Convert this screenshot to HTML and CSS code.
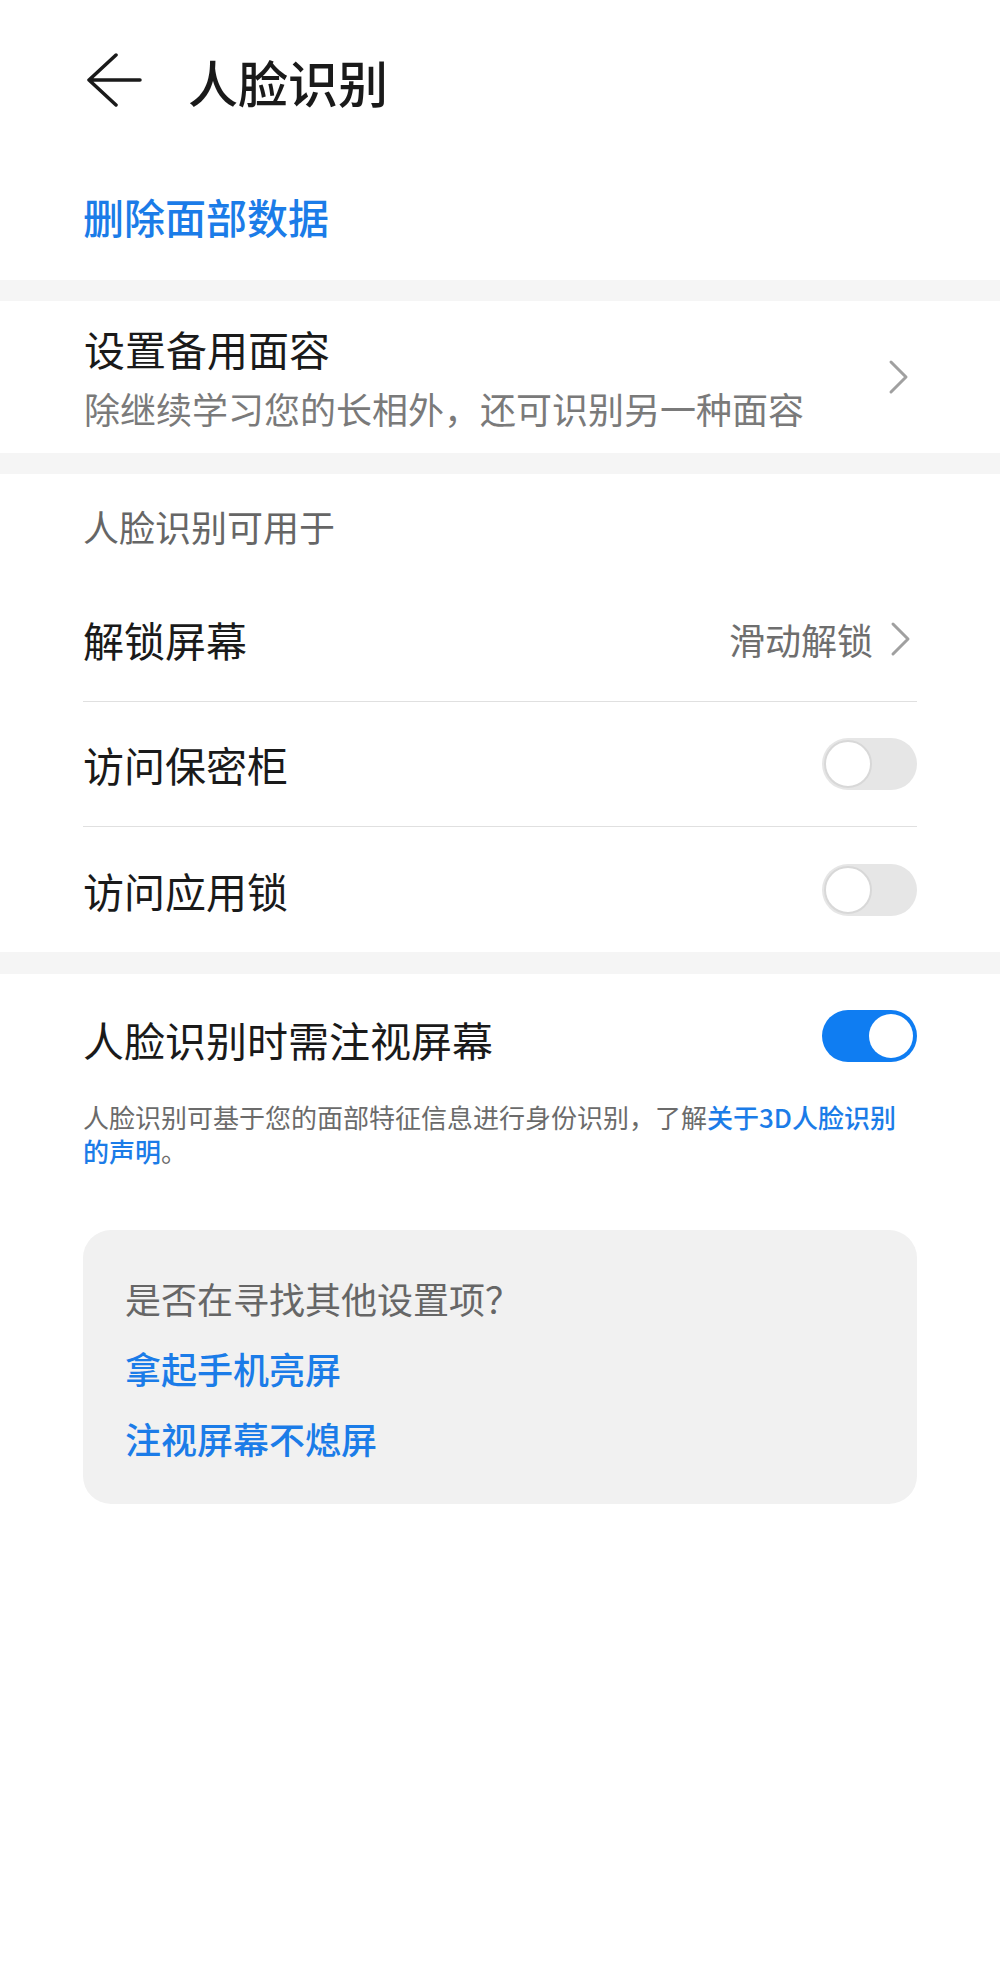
FILE: index.html
```html
<html lang="zh-CN">

<head>
    <meta charset="UTF-8">
    <meta name="viewport" content="width=device-width, initial-scale=1.0">
    <title>人脸识别</title>
    <link rel="stylesheet" href="styles.css">
</head>

<body>
    <header class="top-bar">
        <a href="#" class="back-button" aria-label="返回">
            <svg width="56" height="56" viewBox="0 0 56 56">
                <path d="M3 27 H54 M30 2 L3 27 L30 52" fill="none" stroke="#1a1a1a" stroke-width="3.5" stroke-linecap="round" stroke-linejoin="round" />
            </svg>
        </a>
        <h1>人脸识别</h1>
    </header>

    <div class="delete-row">
        <a href="#" class="link">删除面部数据</a>
    </div>

    <div class="band"></div>

    <div class="list-item">
        <div class="item-text">
            <div class="item-title">设置备用面容</div>
            <div class="item-sub">除继续学习您的长相外，还可识别另一种面容</div>
        </div>
        <svg class="chevron" width="24" height="36" viewBox="0 0 24 36">
            <path d="M4 3 L19 18 L4 33" fill="none" stroke="#a0a0a0" stroke-width="3" stroke-linecap="round" stroke-linejoin="round" />
        </svg>
    </div>

    <div class="band"></div>

    <section class="group">
        <div class="group-label">人脸识别可用于</div>
        <div class="row">
            <span class="row-title">解锁屏幕</span>
            <span class="row-value">滑动解锁
                <svg class="chevron" width="24" height="36" viewBox="0 0 24 36">
                    <path d="M4 3 L19 18 L4 33" fill="none" stroke="#a0a0a0" stroke-width="3" stroke-linecap="round" stroke-linejoin="round" />
                </svg>
            </span>
        </div>
        <div class="row">
            <span class="row-title">访问保密柜</span>
            <span class="switch"><span class="knob"></span></span>
        </div>
        <div class="row">
            <span class="row-title">访问应用锁</span>
            <span class="switch"><span class="knob"></span></span>
        </div>
    </section>

    <div class="band band-wide"></div>

    <section class="group">
        <div class="row row-plain">
            <span class="row-title">人脸识别时需注视屏幕</span>
            <span class="switch on"><span class="knob"></span></span>
        </div>
        <p class="note">人脸识别可基于您的面部特征信息进行身份识别，了解<a href="#" class="note-link">关于3D人脸识别的声明</a>。</p>

        <div class="suggest-card">
            <div class="suggest-title">是否在寻找其他设置项？</div>
            <a href="#" class="link suggest-link">拿起手机亮屏</a>
            <a href="#" class="link suggest-link">注视屏幕不熄屏</a>
        </div>
    </section>
</body>

</html>
```

FILE: styles.css
```css
/* Global Styles */
body {
    font-family: "Noto Sans CJK SC", "Noto Sans", sans-serif;
    margin: 0;
    padding: 0;
    background-color: #fff;
    color: #1a1a1a;
    width: 1000px;
}

a {
    text-decoration: none;
}

.link {
    color: #1b7ce8;
    font-weight: 500;
}

/* Top Bar */
.top-bar {
    height: 162px;
    display: flex;
    align-items: center;
    padding-left: 86px;
    box-sizing: border-box;
}

.back-button {
    display: flex;
    width: 56px;
    height: 56px;
    margin-right: 46px;
}

.top-bar h1 {
    margin: 0;
    font-size: 50px;
    font-weight: 500;
    line-height: 60px;
    color: #1a1a1a;
}

/* Delete Face Data */
.delete-row {
    height: 118px;
    padding: 0 83px 10px;
    display: flex;
    align-items: center;
    box-sizing: border-box;
    font-size: 41px;
    line-height: 52px;
}

/* Grey separators */
.band {
    height: 21px;
    background-color: #f5f5f5;
}

.band-wide {
    height: 22px;
}

/* Backup Face Item */
.list-item {
    display: flex;
    align-items: center;
    justify-content: space-between;
    padding: 21px 89px 21px 84px;
}

.item-title {
    font-size: 41px;
    line-height: 52px;
    margin-bottom: 10px;
}

.item-sub {
    font-size: 36px;
    line-height: 48px;
    color: #7a7a7a;
}

.chevron {
    display: block;
    flex-shrink: 0;
}

/* Groups and Rows */
.group {
    padding: 0 83px;
}

.group-label {
    height: 103px;
    display: flex;
    align-items: center;
    font-size: 36px;
    color: #666;
}

.row {
    height: 125px;
    display: flex;
    align-items: center;
    justify-content: space-between;
    border-bottom: 1px solid #e0e0e0;
    box-sizing: border-box;
}

.row:last-child,
.row-plain {
    border-bottom: none;
}

.row-plain {
    height: 126px;
    padding-top: 4px;
}

.row-title {
    font-size: 41px;
    line-height: 52px;
}

.row-value {
    display: flex;
    align-items: center;
    gap: 16px;
    font-size: 36px;
    color: #6e6e6e;
    padding-right: 4px;
}

/* Toggle Switch */
.switch {
    width: 95px;
    height: 52px;
    padding: 2px;
    border-radius: 26px;
    background-color: #e6e6e6;
    display: flex;
    align-items: center;
    box-sizing: border-box;
}

.knob {
    width: 48px;
    height: 48px;
    border-radius: 50%;
    background-color: #fff;
    border: 2px solid #d8d8d8;
    box-sizing: border-box;
}

.switch.on {
    background-color: #0f7df2;
    justify-content: flex-end;
    padding: 4px;
    margin-top: -6px;
}

.switch.on .knob {
    width: 44px;
    height: 44px;
    border: none;
}

/* Note */
.note {
    margin: 0;
    font-size: 26px;
    line-height: 34px;
    color: #6b6b6b;
}

.note-link {
    color: #1b7ce8;
    font-weight: 500;
}

/* Suggestion Card */
.suggest-card {
    margin-top: 62px;
    background-color: #f1f1f1;
    border-radius: 28px;
    padding: 33px 42px 31px;
    display: flex;
    flex-direction: column;
}

.suggest-title,
.suggest-link {
    font-size: 36px;
    line-height: 70px;
}

.suggest-title {
    color: #666;
}
```
